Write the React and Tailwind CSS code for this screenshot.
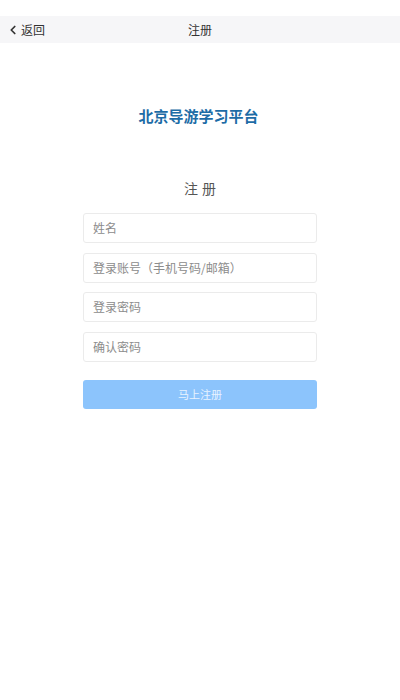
import { ChevronLeft } from "lucide-react"

const fields = ["姓名", "登录账号（手机号码/邮箱）", "登录密码", "确认密码"]

const App = () => {
    return (
        <div className="w-[400px] h-[700px] bg-white text-[#333]" style={{ fontFamily: '"Noto Sans CJK SC", "Noto Sans", sans-serif' }}>
            <div className="pt-4">
                <div className="relative flex items-center h-[27px] bg-[#f6f6f8]">
                    <div className="flex items-center pl-[6px] text-[12px] text-[#333]">
                        <ChevronLeft size={14} strokeWidth={3} />
                        <span className="ml-[1px]">返回</span>
                    </div>
                    <div className="absolute inset-0 flex items-center justify-center text-[12px] text-[#333]">注册</div>
                </div>
            </div>
            <div className="flex flex-col items-center">
                <h1 className="mt-[62px] text-[15px] leading-[22px] font-bold text-[#1d6ca6] tracking-[0px] pr-[3px]">北京导游学习平台</h1>
                <h2 className="mt-[51px] text-[14px] leading-[20px] text-[#555] tracking-[4px] pl-[4px]">注册</h2>
                <div className="mt-[15px] w-[234px] flex flex-col gap-[9.5px]">
                    {fields.map((f) => (
                        <div key={f} className="h-[30px] border border-[#ebebeb] rounded-[3px] flex items-center px-[9px] text-[12px] text-[#8c8c8c]">
                            {f}
                        </div>
                    ))}
                </div>
                <div className="mt-[18px] w-[234px] h-[29px] rounded-[3px] bg-[#8cc4fc] flex items-center justify-center text-[11px] text-[#e8f3ff]">
                    马上注册
                </div>
            </div>
        </div>
    )
}

export default App
